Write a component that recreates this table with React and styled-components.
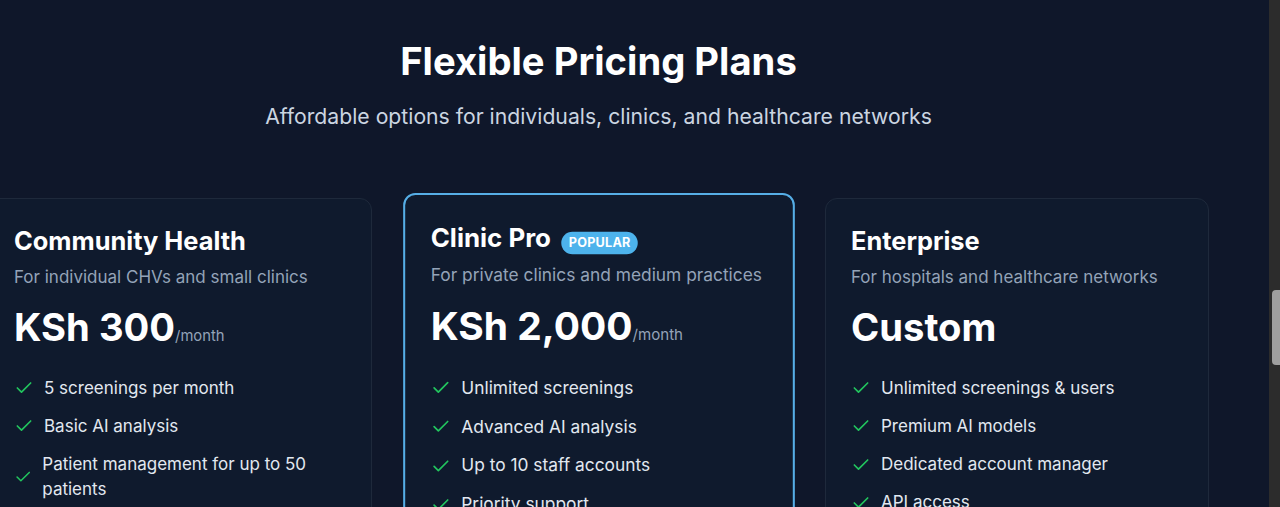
import React from 'react'
import styled, { createGlobalStyle } from 'styled-components'
import { Check } from 'lucide-react'

const plans = [
  {
    name: 'Community Health',
    description: 'For individual CHVs and small clinics',
    price: 'KSh 300',
    period: '/month',
    features: [
      '5 screenings per month',
      'Basic AI analysis',
      'Patient management for up to 50 patients',
      'Email support',
    ],
    cta: 'Get Started',
  },
  {
    name: 'Clinic Pro',
    description: 'For private clinics and medium practices',
    price: 'KSh 2,000',
    period: '/month',
    popular: true,
    features: [
      'Unlimited screenings',
      'Advanced AI analysis',
      'Up to 10 staff accounts',
      'Priority support',
      'Analytics dashboard',
    ],
    cta: 'Start Free Trial',
  },
  {
    name: 'Enterprise',
    description: 'For hospitals and healthcare networks',
    price: 'Custom',
    features: [
      'Unlimited screenings & users',
      'Premium AI models',
      'Dedicated account manager',
      'API access',
      'Custom integrations',
    ],
    cta: 'Contact Sales',
  },
]

const PricingPage = () => {
  return (
    <Frame>
      <GlobalStyle />
      <Main>
        <Section>
          <Header>
            <Title>Flexible Pricing Plans</Title>
            <Subtitle>Affordable options for individuals, clinics, and healthcare networks</Subtitle>
          </Header>
          <CardGrid>
            {plans.map((plan) => (
              <Card key={plan.name} highlighted={plan.popular}>
                <NameRow>
                  <PlanName>{plan.name}</PlanName>
                  {plan.popular && <Badge>POPULAR</Badge>}
                </NameRow>
                <PlanDesc>{plan.description}</PlanDesc>
                <PriceRow>
                  <Price>{plan.price}</Price>
                  {plan.period && <Period>{plan.period}</Period>}
                </PriceRow>
                <FeatureList>
                  {plan.features.map((f) => (
                    <Feature key={f}>
                      <Check size={20} color="#22c55e" strokeWidth={2} />
                      <span>{f}</span>
                    </Feature>
                  ))}
                </FeatureList>
                <CtaButton highlighted={plan.popular}>{plan.cta}</CtaButton>
              </Card>
            ))}
          </CardGrid>
        </Section>
      </Main>
      <ScrollTrack>
        <ScrollThumb />
      </ScrollTrack>
    </Frame>
  )
}

const GlobalStyle = createGlobalStyle`
  html, body {
    margin: 0;
    padding: 0;
    background: #0f172a;
    overflow: hidden;
  }
  body {
    font-family: Inter, "Noto Sans", sans-serif;
    -webkit-font-smoothing: antialiased;
  }
  * {
    box-sizing: border-box;
  }
`

const Frame = styled.div`
  display: flex;
  width: 1280px;
  height: 507px;
  overflow: hidden;
`
const Main = styled.main`
  flex: 1;
  height: 507px;
  overflow: hidden;
  background: #0f172a;
`
const Section = styled.section`
  width: 1221px;
  margin-left: -12px;
  padding-top: 37px;
`
const Header = styled.div`
  text-align: center;
`
const Title = styled.h2`
  margin: 0;
  font-size: 38.2px;
  line-height: 48px;
  font-weight: 700;
  color: #ffffff;
`
const Subtitle = styled.p`
  margin: 16px 0 0;
  font-size: 21.2px;
  line-height: 30px;
  color: #cbd5e1;
`
const CardGrid = styled.div`
  margin-top: 67px;
  display: grid;
  grid-template-columns: repeat(3, 1fr);
  column-gap: 34.5px;
`
const Card = styled.div`
  min-height: 500px;
  display: flex;
  flex-direction: column;
  padding: 26px 24px 28px 25px;
  border-radius: 12px;
  background: #0f1a2d;
  border: ${(p) => (p.highlighted ? '2px solid #56aee6' : '1px solid #1e293b')};
  transform: ${(p) => (p.highlighted ? 'scale(1.02)' : 'none')};
`
const NameRow = styled.div`
  display: flex;
  align-items: flex-end;
  gap: 10px;
`
const PlanName = styled.h3`
  margin: 0;
  font-size: 25.4px;
  line-height: 32px;
  font-weight: 700;
  color: #ffffff;
`
const Badge = styled.span`
  display: inline-block;
  padding: 5px 7.5px;
  border-radius: 999px;
  background: #4db3ec;
  color: #ffffff;
  font-size: 12.4px;
  line-height: 12.5px;
  font-weight: 700;
  letter-spacing: 0.2px;
`
const PlanDesc = styled.p`
  margin: 8px 0 0;
  font-size: 17px;
  line-height: 24px;
  color: #94a3b8;
`
const PriceRow = styled.div`
  margin-top: 18px;
  display: flex;
  align-items: baseline;
`
const Price = styled.span`
  font-size: 38.2px;
  line-height: 40px;
  font-weight: 700;
  color: #ffffff;
`
const Period = styled.span`
  font-size: 14.8px;
  color: #94a3b8;
`
const FeatureList = styled.ul`
  list-style: none;
  margin: 28.5px 0 0;
  padding: 0;
  display: flex;
  flex-direction: column;
  gap: 13.3px;
`
const Feature = styled.li`
  display: flex;
  align-items: center;
  gap: 10px;
  font-size: 17px;
  line-height: 25px;
  color: #e2e8f0;
`
const CtaButton = styled.button`
  margin-top: auto;
  height: 48px;
  border-radius: 8px;
  border: ${(p) => (p.highlighted ? 'none' : '1px solid #334155')};
  background: ${(p) => (p.highlighted ? '#4db3ec' : 'transparent')};
  color: #ffffff;
  font-family: inherit;
  font-size: 16px;
  font-weight: 600;
`
const ScrollTrack = styled.div`
  width: 11px;
  height: 507px;
  background: #2c2c2c;
  padding-top: 290px;
  padding-left: 3px;
`
const ScrollThumb = styled.div`
  width: 8px;
  height: 75px;
  border-radius: 4px 0 0 4px;
  background: #9f9f9f;
`

export default PricingPage
